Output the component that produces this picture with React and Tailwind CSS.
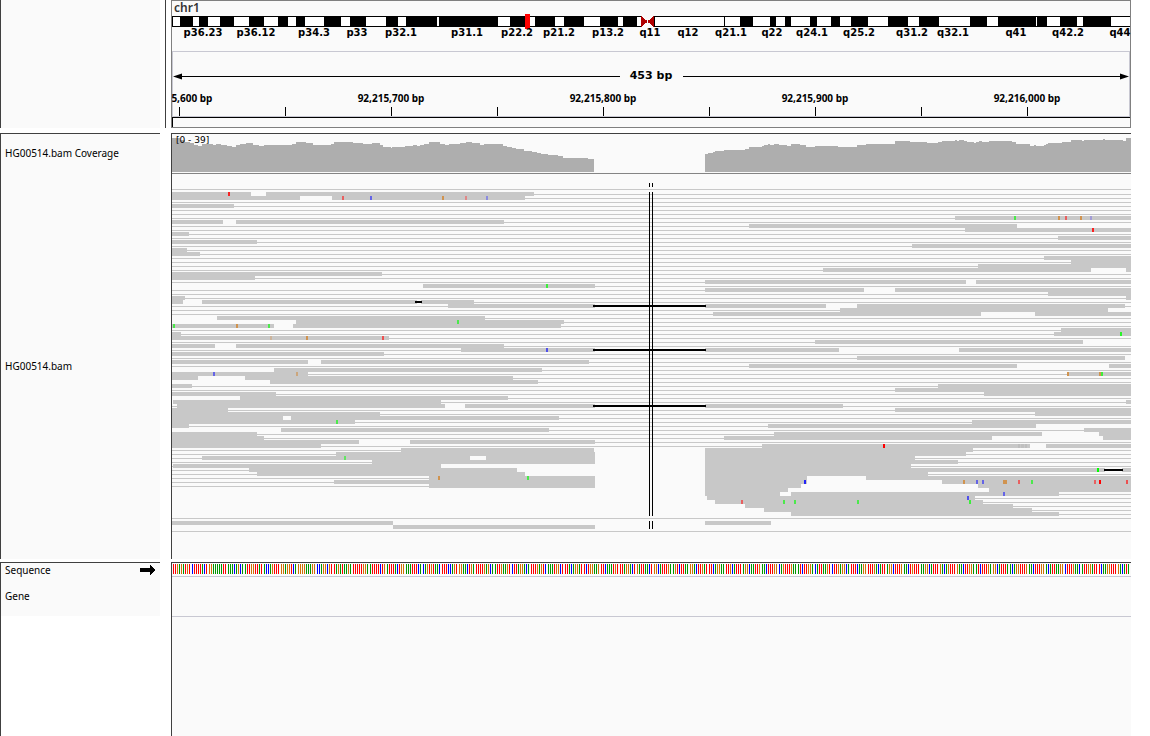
import React from 'react';

const X0 = 172;
const W = 959;

const bands = [
  [180, 193], [199, 208], [220, 234], [249, 264], [278, 288], [296, 305], [324, 341], [350, 366],
  [386, 398], [406, 437], [439, 498], [510, 526], [535, 555], [564, 584], [600, 618], [623, 637],
  [724, 725], [740, 753], [770, 776], [785, 791], [810, 817], [831, 840], [851, 868], [888, 908],
  [919, 939], [970, 987], [998, 1036], [1037, 1047], [1060, 1077], [1083, 1111],
];

const cytoLabels = [
  ['p36.23', 203], ['p36.12', 256], ['p34.3', 314], ['p33', 357], ['p32.1', 401], ['p31.1', 467],
  ['p22.2', 517], ['p21.2', 559], ['p13.2', 608], ['q11', 650], ['q12', 688], ['q21.1', 731],
  ['q22', 772], ['q24.1', 812], ['q25.2', 859], ['q31.2', 912], ['q32.1', 953], ['q41', 1016],
  ['q42.2', 1068], ['q44', 1120],
];

const ticks = [179, 285, 391, 497, 603, 709, 815, 921, 1027];
const tickLabels = [
  ['92,215,600 bp', 179], ['92,215,700 bp', 391], ['92,215,800 bp', 603],
  ['92,215,900 bp', 815], ['92,216,000 bp', 1027],
];

// Coverage steps: [x, top] until the next entry; null closes a block.
const coverage = [
  [172, 138], [180, 140], [185, 142], [190, 143], [194, 145], [198, 146], [202, 144], [213, 145],
  [216, 144], [221, 145], [227, 146], [232, 147], [236, 145], [240, 144], [246, 143], [253, 145],
  [259, 146], [264, 145], [270, 145], [292, 144], [296, 142], [306, 143], [313, 145], [331, 144],
  [334, 142], [353, 143], [363, 144], [372, 143], [380, 145], [383, 147], [391, 148], [392, 147],
  [405, 146], [413, 145], [417, 146], [420, 145], [424, 144], [429, 142], [440, 144], [445, 145],
  [449, 144], [460, 143], [466, 142], [472, 143], [480, 145], [484, 144], [503, 146], [507, 147],
  [512, 148], [516, 149], [524, 151], [532, 152], [537, 153], [541, 154], [548, 155], [558, 156],
  [563, 158], [588, 159], [594, null],
  [705, 154], [708, 153], [713, 152], [715, 151], [724, 150], [745, 149], [749, 147], [762, 146],
  [764, 145], [768, 144], [770, 145], [774, 144], [779, 145], [787, 146], [791, 144], [800, 145],
  [806, 147], [815, 146], [838, 147], [857, 145], [866, 144], [895, 141], [910, 142], [927, 143],
  [938, 142], [942, 141], [955, 140], [957, 141], [959, 140], [964, 141], [967, 142], [974, 143],
  [976, 142], [979, 141], [982, 142], [989, 141], [1012, 142], [1016, 144], [1030, 146], [1034, 145],
  [1036, 146], [1044, 145], [1046, 144], [1048, 143], [1062, 142], [1071, 140], [1082, 141],
  [1084, 140], [1103, 139], [1105, 140], [1123, 141], [1126, 138], [1131, null],
];

const E = 1131;
const L = 172;
// One entry per packed row: reads (thick) and mate connectors (thin).
const rows = [
  { r: [[L, 251], [266, 534]], l: [[534, E]] },
  { r: [[L, 300], [332, 525]], l: [[525, E]] },
  { r: [], l: [[L, E]] },
  { r: [[L, 234]], l: [[234, E]] },
  { r: [], l: [[L, E]] },
  { r: [], l: [[L, E]] },
  { r: [[955, E]], l: [[L, 955]] },
  { r: [[L, 223], [236, 504]], l: [[504, E]] },
  { r: [[749, 1017]], l: [[L, 749]] },
  { r: [[965, E]], l: [[L, 965]] },
  { r: [[L, 189]], l: [[189, E]] },
  { r: [[1058, E]], l: [[L, 1058]] },
  { r: [[L, 257]], l: [[257, E]] },
  { r: [[912, E]], l: [[L, 912]] },
  { r: [[L, 187]], l: [[187, E]] },
  { r: [[L, 200]], l: [[200, E]] },
  { r: [[1044, E]], l: [[L, 1044]] },
  { r: [[1071, E]], l: [[L, 1071]] },
  { r: [[978, E]], l: [[L, 978]] },
  { r: [[823, 1091], [1126, E]], l: [[L, 823]] },
  { r: [[L, 382]], l: [[382, E]] },
  { r: [[L, 255]], l: [[255, E]] },
  { r: [[705, 966], [976, E]], l: [[L, 705]] },
  { r: [[423, 595]], l: [[595, E]] },
  { r: [[705, 864], [895, E]], l: [[L, 705]] },
  { r: [[1048, E]], l: [[L, 1048]] },
  { r: [[L, 185], [1126, E]], l: [[185, 1126]] },
  { r: [[L, 183], [202, 417], [421, 474]], l: [[474, E]] },
  { r: [[448, 595], [705, 826], [857, 1125]], l: [[L, 448], [1125, E]] },
  { r: [[840, 1108]], l: [[L, 840]] },
  { r: [[713, 981], [1035, E]], l: [[L, 713]] },
  { r: [[217, 485]], l: [[485, E]] },
  { r: [[296, 564]], l: [[564, E]] },
  { r: [[L, 274], [293, 561]], l: [[561, E]] },
  { r: [[1061, E]], l: [[L, 1061]] },
  { r: [[L, 181], [1054, E]], l: [[181, 1054]] },
  { r: [[L, 389]], l: [[389, E]] },
  { r: [[815, 1083]], l: [[L, 815]] },
  { r: [[L, 215], [236, 504]], l: [[504, E]] },
  { r: [[461, 595], [705, 839], [959, E]], l: [[L, 461]] },
  { r: [[L, 384]], l: [[384, E]] },
  { r: [[857, 1125]], l: [[L, 857]] },
  { r: [[L, 308], [321, 589]], l: [[589, E]] },
  { r: [[749, 1017], [1109, E]], l: [[L, 749]] },
  { r: [[274, 542]], l: [[542, E]] },
  { r: [[L, 308], [1067, E]], l: [[308, 1067]] },
  { r: [[L, 198], [245, 513]], l: [[513, E]] },
  { r: [[270, 538]], l: [[538, E]] },
  { r: [[L, 192], [938, E]], l: [[192, 938]] },
  { r: [[895, E]], l: [[L, 895]] },
  { r: [[L, 276], [984, E]], l: [[276, 984]] },
  { r: [[240, 508]], l: [[508, E]] },
  { r: [[173, 441], [1126, E]], l: [[441, 1126]] },
  { r: [[177, 445], [465, 595], [705, 843]], l: [[L, 177], [843, E]] },
  { r: [[L, 228], [895, E]], l: [[228, 895]] },
  { r: [[L, 380], [1035, E]], l: [[380, 1035]] },
  { r: [[L, 283], [291, 559]], l: [[559, E]] },
  { r: [[L, 355], [972, E]], l: [[355, 972]] },
  { r: [[L, 189], [768, 1036]], l: [[189, 768]] },
  { r: [[281, 549], [1084, E]], l: [[549, 1084]] },
  { r: [[L, 257], [774, 1042], [1099, E]], l: [[257, 774]] },
  { r: [[L, 264], [724, 992], [1103, E]], l: [[264, 724]] },
  { r: [[L, 359], [410, 595]], l: [[595, E]] },
  { r: [[L, 321], [762, 1030], [1046, E]], l: [[321, 762]] },
  { r: [[401, 594], [705, 973]], l: [[L, 401], [973, E]] },
  { r: [[336, 595], [705, 966]], l: [[L, 336], [966, E]] },
  { r: [[202, 470], [486, 595], [705, 915]], l: [[L, 202], [915, E]] },
  { r: [[372, 595], [705, 958]], l: [[L, 372], [958, E]] },
  { r: [[173, 441], [705, 911]], l: [[L, 173], [911, E]] },
  { r: [[249, 517], [705, 1105], [1122, E]], l: [[L, 249]] },
  { r: [[257, 525], [705, 928]], l: [[L, 257], [928, E]] },
  { r: [[429, 595], [705, 807], [866, E]], l: [[L, 429]] },
  { r: [[334, 595], [705, 807], [942, E]], l: [[L, 334]] },
  { r: [[429, 595], [705, 801], [978, E]], l: [[L, 429]] },
  { r: [[705, 788], [989, E]], l: [] },
  { r: [[705, 780], [791, 1059]], l: [[1059, E]] },
  { r: [[707, 975]], l: [[975, E]] },
  { r: [[715, 983]], l: [[983, E]] },
  { r: [[745, 1013]], l: [[1013, E]] },
  { r: [[764, 1032]], l: [[1032, E]] },
  { r: [[791, 1059]], l: [[1059, E]] },
];

// Mismatched bases: [row, x, colour, width]
const G = '#4ce94c';
const O = '#d0934f';
const R = '#e86060';
const B = '#6464e6';
const mismatches = [
  [0, 228, '#f62424'], [1, 342, R], [1, 370, B], [1, 442, O], [1, 465, '#e08888'], [1, 486, '#8c8ce0'],
  [6, 1014, G], [6, 1058, O], [6, 1065, R], [6, 1080, O], [6, 1090, '#a29cd6'], [9, 1092, '#fa2020'],
  [23, 546, '#3cee3c'], [32, 457, G], [33, 173, G], [33, 236, O], [33, 268, G], [35, 1120, '#28f428'],
  [36, 270, '#ccb49c'], [36, 306, O], [36, 382, '#ec5050'], [39, 546, '#5050ea'],
  [45, 213, B], [45, 296, '#cca67c'], [45, 1067, O], [45, 1099, O], [45, 1101, '#3cee3c'],
  [57, 336, G], [63, 883, '#ff0000'], [63, 1018, '#bebebe'], [63, 1021, '#c0c0c0', 3], [63, 1025, '#bebebe'],
  [66, 344, '#64e464'], [69, 1097, '#00ff00'], [71, 438, O], [71, 527, G],
  [72, 804, '#2424f6'], [72, 963, O], [72, 976, B], [72, 982, B], [72, 1003, O, 4], [72, 1018, R],
  [72, 1031, G], [72, 1094, R], [72, 1099, '#ff0000'], [72, 1126, '#ec5050'],
  [75, 1003, B], [76, 967, '#5050ea'], [77, 741, R], [77, 783, G], [77, 794, G], [77, 857, G], [77, 969, '#3cee3c'],
];

const deletions = [[27, 415, 422], [28, 593, 706], [39, 593, 706], [53, 593, 706], [69, 1104, 1123]];

const sequence =
  'TTGAGATGTCTTTTACTGGAAAAATTAAACAGCAATTGGTTATACCAGTTTGGAGGTCAGGGGAAAGGCCAGGCGTTAGATAAGATTTTTGGAATTTT' +
  'CTGATTTACTGGAAATTTCACAGTGTAACTTTCCAGTGGAACTGATTTTGAGCAATTGAAGTCTTAGGACATTTGAGTCAAATGGCTTTACAGG' +
  'ATTCTGGAAGTTCAAATGTTTAGGACTGATTAACTGGCATTTGAAGTCTTAAGGACTTGATTTCAGGAATTGCATTTAGGCAATTGAACTTTGG' +
  'CAGTTTGAAATCTTGGACATTAAGTCTTGAGGCATTTCAAGGTTTGACATTAGGCTTTGAACTGTTTAAGGCATTTGACAGTTTGAACTTGGAA' +
  'TCTTTGAGGCATTTAACAGGTTTGAACTTTGGACATTAAGGCTTTGAACATTGGATTTCAAGGTTTGACATAAGTCTTGAACC';
const baseColor = { A: '#009600', C: '#0000ff', G: '#d17105', T: '#ff0000' };

const pct = (x, w) => `${((x - X0) / w) * 100}%`;

function Plot({ x = X0, y, h, w = W, children, className, label }) {
  return (
    <svg
      role="img"
      aria-label={label}
      viewBox={`${x} ${y} ${w} ${h}`}
      preserveAspectRatio="none"
      shapeRendering="crispEdges"
      className={className}
    >
      {children}
    </svg>
  );
}

function Span({ x1, x2, y, h, fill }) {
  return <rect x={x1} y={y} width={x2 - x1} height={h} fill={fill} />;
}

function Ideogram() {
  return (
    <div className="h-[50px]">
      <h1 className="h-[13px] pl-[2px] text-[12px] leading-[14px] font-semibold text-[#333]">chr1</h1>
      <Plot y={14} h={15} w={958} className="block h-[15px] w-full" label="Chromosome 1 ideogram">
        <rect x="172" y="16" width="958" height="11" fill="#000" />
        <rect x="173" y="17" width="957" height="9" fill="#fff" />
        {bands.map(([a, b]) => (
          <Span key={a} x1={a} x2={b} y={17} h={9} fill="#000" />
        ))}
        <rect x="641" y="16" width="13" height="11" fill="#fafafa" />
        <path d="M641 16 L648 21.5 L641 27Z M654 16 L647 21.5 L654 27Z" fill="#b00000" />
        <rect x="654" y="16" width="1" height="11" fill="#000" />
        <rect x="525" y="14" width="5" height="15" fill="#f00" />
      </Plot>
      <div className="relative h-[14px] font-['DejaVu_Sans',sans-serif] text-[10px] leading-[7px] font-bold">
        {cytoLabels.map(([t, x]) => (
          <span key={t} className="absolute top-0 -translate-x-1/2 whitespace-nowrap" style={{ left: pct(x, 958) }}>
            {t}
          </span>
        ))}
      </div>
    </div>
  );
}

function Ruler() {
  return (
    <div className="border border-[#c8c8d2]">
      <div className="flex h-[48px] items-center">
        <svg viewBox="0 0 10 7" className="h-[7px] w-[10px] shrink-0" aria-hidden="true">
          <path d="M0 3.5 L9 0.5 V6.5Z" />
        </svg>
        <div className="-ml-[2px] h-px flex-1 bg-black" />
        <span className="w-[63px] text-center font-['DejaVu_Sans',sans-serif] text-[11px] leading-[16px] font-bold whitespace-nowrap">
          453 bp
        </span>
        <div className="-mr-[2px] h-px flex-1 bg-black" />
        <svg viewBox="0 0 10 7" className="h-[7px] w-[10px] shrink-0" aria-hidden="true">
          <path d="M10 3.5 L1 0.5 V6.5Z" />
        </svg>
      </div>
      <div className="relative h-[7px] text-[10px] leading-[12px] font-bold">
        <div className="absolute -inset-x-px -top-[8px] h-[15px] overflow-hidden">
          {tickLabels.map(([t, x]) => (
            <span key={t} className="absolute top-0 -translate-x-1/2 whitespace-nowrap" style={{ left: pct(x, 958) }}>
              {t}
            </span>
          ))}
        </div>
      </div>
      <Plot x={173} y={107} h={9} w={956} className="block h-[9px] w-full" label="Ruler ticks">
        {ticks.map((x) => (
          <Span key={x} x1={x} x2={x + 1} y={107} h={9} fill="#000" />
        ))}
      </Plot>
    </div>
  );
}

function CoverageTrack() {
  return (
    <div className="relative border-b border-[#848484]">
      <Plot y={134} h={39} className="block h-[39px] w-full" label="Coverage histogram">
        {coverage.slice(0, -1).map(([x, top], i) =>
          top === null ? null : (
            <Span key={x} x1={x} x2={coverage[i + 1][0]} y={top} h={172 - top} fill="#aeaeae" />
          ),
        )}
      </Plot>
      <span className="absolute top-[1px] left-[4px] font-['DejaVu_Sans',sans-serif] text-[9px] leading-[10px]">
        [0 - 39]
      </span>
    </div>
  );
}

function AlignmentTrack() {
  const grey = '#c8c8c8';
  return (
    <Plot y={174} h={385} className="block h-[385px] w-full" label="Aligned reads">
      {[189, 518, 531].map((y) => (
        <Span key={y} x1={L} x2={E} y={y} h={1} fill={grey} />
      ))}
      {rows.map((row, i) => (
        <g key={i} fill={grey}>
          {row.l.map(([a, b]) => (
            <rect key={`l${a}`} x={a} y={194 + 4 * i} width={b - a} height="1" />
          ))}
          {row.r.map(([a, b]) => (
            <rect key={`r${a}`} x={a} y={192 + 4 * i} width={b - a} height="4" />
          ))}
        </g>
      ))}
      <Span x1={172} x2={393} y={521} h={4} fill={grey} />
      <Span x1={705} x2={771} y={521} h={4} fill={grey} />
      <Span x1={393} x2={595} y={525} h={4} fill={grey} />
      {mismatches.map(([i, x, c, w = 2]) => (
        <rect key={`${i}-${x}`} x={x} y={192 + 4 * i} width={w} height="4" fill={c} />
      ))}
      {deletions.map(([i, a, b]) => (
        <Span key={i} x1={a} x2={b} y={193 + 4 * i} h={2} fill="#000" />
      ))}
      {[649, 652].map((x) => (
        <g key={x}>
          <rect x={x} y="183" width="1" height="4" />
          <rect x={x} y="192" width="1" height="324" />
          <rect x={x} y="521" width="1" height="8" />
        </g>
      ))}
    </Plot>
  );
}

function SequenceTrack() {
  return (
    <Plot y={563} h={13} className="block h-[13px] w-full" label="Reference sequence">
      {sequence.split('').slice(0, 452).map((b, i) => {
        const x = Math.floor(173 + i * 2.119);
        return <rect key={i} x={x} y="564" width="1" height="10" fill={baseColor[b]} />;
      })}
    </Plot>
  );
}

export default function App() {
  return (
    <main className="flex min-h-screen flex-col gap-[3px] bg-white pr-[19px] font-['Noto_Sans',sans-serif] text-[10px] text-black">
      <section className="mb-[2px] flex h-[128px]">
        <div className="w-[160px] shrink-0 border-l border-[#404040] bg-[#fafafa]" />
        <div className="w-[11px] shrink-0 pl-[5px]">
          <div className="h-full w-px bg-[#404040]" />
        </div>
        <div className="flex min-w-0 flex-1 flex-col border border-[#808080] bg-[#fafafa]">
          <Ideogram />
          <Ruler />
          <div className="flex-1 border-t border-l border-black" />
        </div>
      </section>

      <section className="flex">
        <div className="flex w-[160px] shrink-0 flex-col border-t border-l border-[#404040] bg-[#fafafa] pl-[4px] leading-[14px]">
          <h2 className="mt-[12px]">HG00514.bam Coverage</h2>
          <h2 className="mt-[199px]">HG00514.bam</h2>
        </div>
        <div className="w-[11px] shrink-0" />
        <div className="min-w-0 flex-1 border-t border-l border-[#404040] bg-[#fafafa]">
          <CoverageTrack />
          <AlignmentTrack />
        </div>
      </section>

      <section className="flex flex-1">
        <div className="w-[160px] shrink-0 border-t border-l border-[#404040] leading-[14px]">
          <div className="h-[53px] bg-[#fafafa] pr-[5px] pl-[4px]">
            <div className="flex h-[14px] items-center justify-between">
              <h2>Sequence</h2>
              <svg viewBox="0 0 15 10" className="h-[10px] w-[15px]" shapeRendering="crispEdges" role="img" aria-label="Forward strand">
                <path d="M0 3 H10 V0 L15 5 L10 10 V7 H0Z" />
              </svg>
            </div>
            <h2 className="mt-[12px]">Gene</h2>
          </div>
        </div>
        <div className="w-[11px] shrink-0" />
        <div className="min-w-0 flex-1 border-t border-l border-[#404040] bg-[#fafafa]">
          <SequenceTrack />
          <div className="h-[41px] border-y border-[#c8c8d2]" />
        </div>
      </section>
    </main>
  );
}
